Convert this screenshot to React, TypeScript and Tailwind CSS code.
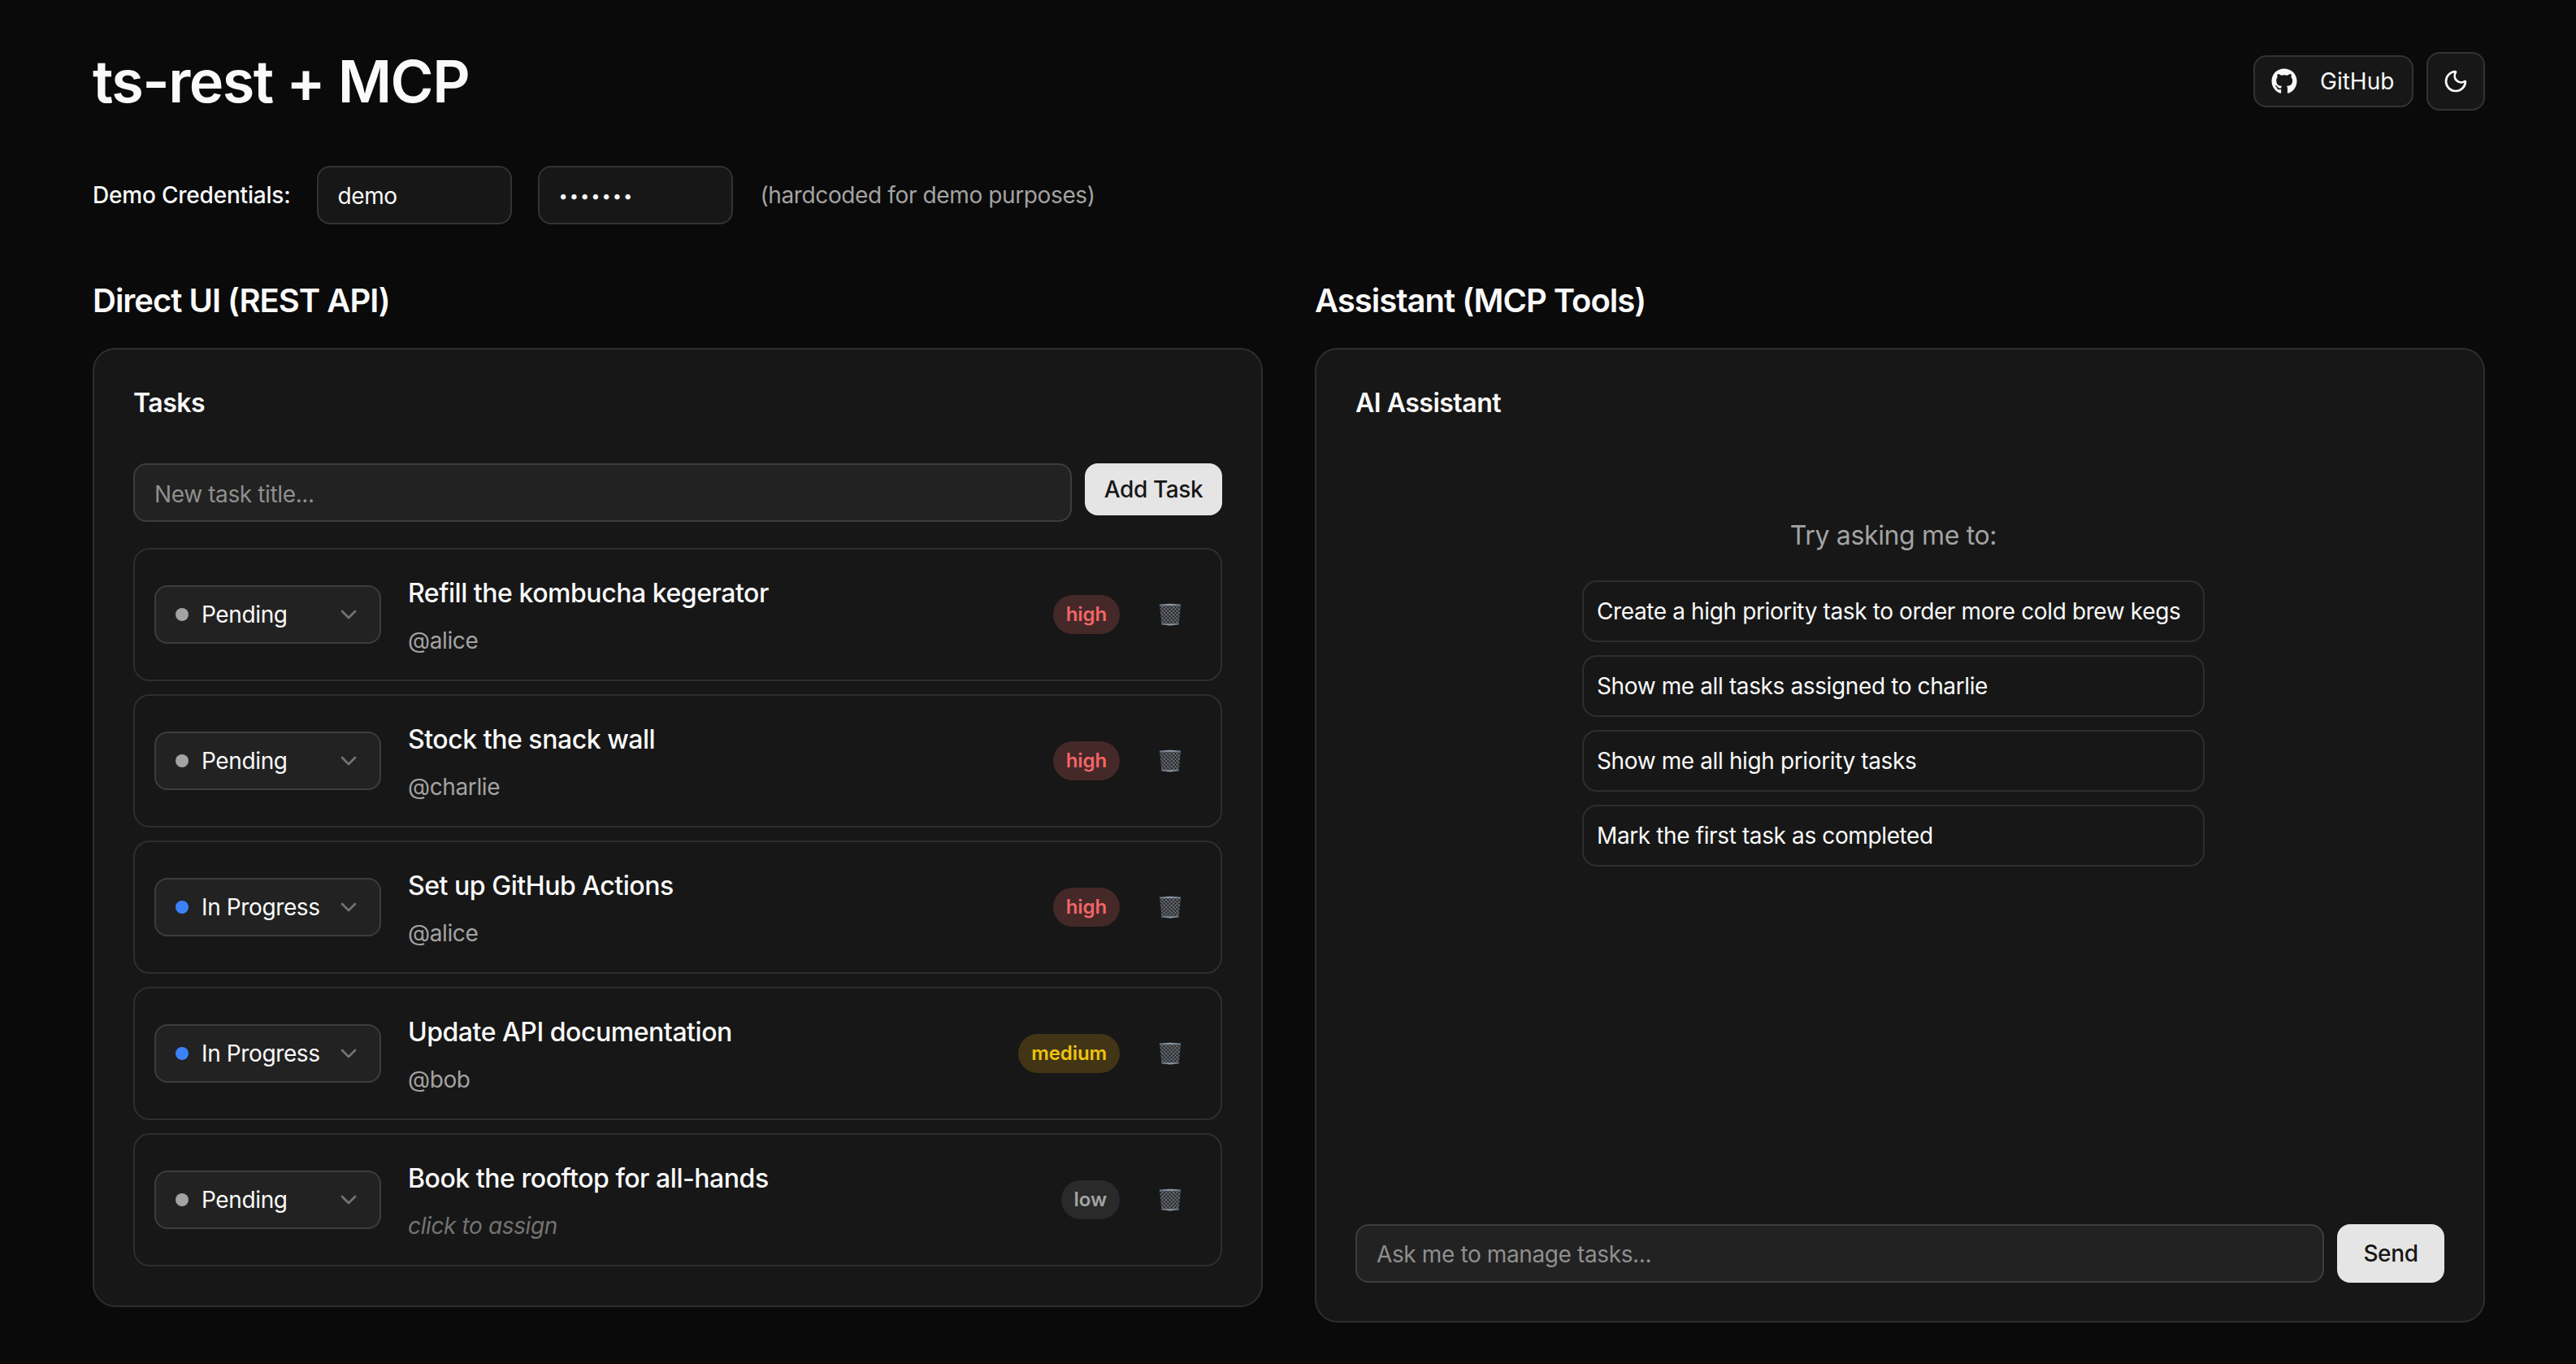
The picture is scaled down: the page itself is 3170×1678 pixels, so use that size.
import { ChevronDown, Moon } from 'lucide-react'
import { FaGithub } from 'react-icons/fa'

type Priority = 'high' | 'medium' | 'low'
type Status = 'Pending' | 'In Progress'

interface Task {
  title: string
  owner: string | null
  status: Status
  priority: Priority
}

const tasks: Task[] = [
  { title: 'Refill the kombucha kegerator', owner: '@alice', status: 'Pending', priority: 'high' },
  { title: 'Stock the snack wall', owner: '@charlie', status: 'Pending', priority: 'high' },
  { title: 'Set up GitHub Actions', owner: '@alice', status: 'In Progress', priority: 'high' },
  { title: 'Update API documentation', owner: '@bob', status: 'In Progress', priority: 'medium' },
  { title: 'Book the rooftop for all-hands', owner: null, status: 'Pending', priority: 'low' },
]

const suggestions = [
  'Create a high priority task to order more cold brew kegs',
  'Show me all tasks assigned to charlie',
  'Show me all high priority tasks',
  'Mark the first task as completed',
]

const priorityStyles: Record<Priority, string> = {
  high: 'bg-[#452828] text-[#f26666]',
  medium: 'bg-[#413516] text-[#eec30f]',
  low: 'bg-[#2a2a2a] text-[#a3a3a3]',
}

function TrashIcon({ id }: { id: string }) {
  return (
    <svg width="28" height="28" viewBox="0 0 28 28">
      <defs>
        <pattern id={id} width="3.2" height="3.2" patternUnits="userSpaceOnUse" patternTransform="rotate(45)">
          <rect width="3.2" height="3.2" fill="#292b2e" />
          <path d="M0 0H3.2M0 0V3.2" stroke="#85898f" strokeWidth="1.1" />
        </pattern>
        <linearGradient id={`${id}-rim`} x1="0" x2="1" y1="0" y2="0">
          <stop offset="0" stopColor="#5f6b78" />
          <stop offset="0.5" stopColor="#97a3b0" />
          <stop offset="1" stopColor="#5f6b78" />
        </linearGradient>
      </defs>
      <path d="M1 2L3.4 26Q14 28 24.6 26L27 2Z" fill={`url(#${id})`} />
      <path d="M3.2 24.4Q14 26.6 24.8 24.4L24.6 26.6Q14 28.2 3.4 26.6Z" fill={`url(#${id}-rim)`} />
      <path d="M0.8 1.6Q14 -0.2 27.2 1.6L27 3.4Q14 2 1 3.4Z" fill={`url(#${id}-rim)`} />
    </svg>
  )
}

function StatusSelect({ status }: { status: Status }) {
  return (
    <button className="flex h-[72px] w-[279px] shrink-0 items-center rounded-2xl border-2 border-[#3d3d3d] bg-[#222222] pl-6 pr-[22px] text-[28px] text-[#fafafa]">
      <span className={`h-4 w-4 rounded-full ${status === 'Pending' ? 'bg-[#a3a3a3]' : 'bg-[#3b82f6]'}`} />
      <span className="ml-4">{status}</span>
      <ChevronDown className="ml-auto h-8 w-8 text-[#737373]" />
    </button>
  )
}

function TaskRow({ task, index }: { task: Task; index: number }) {
  return (
    <div className="flex h-[164px] items-center rounded-[20px] border-2 border-[#2e2e2e] px-6">
      <StatusSelect status={task.status} />
      <div className="ml-[33px] min-w-0 flex-1 pt-[2px]">
        <div className="text-[32px] font-medium leading-[48px] tracking-[-0.46px] text-[#fafafa]">{task.title}</div>
        {task.owner ? (
          <div className="mt-[14px] text-[28px] leading-10 text-[#a3a3a3]">{task.owner}</div>
        ) : (
          <div className="mt-[14px] text-[28px] italic leading-10 text-[#737373]">click to assign</div>
        )}
      </div>
      <span
        className={`rounded-full px-4 text-[24px] font-semibold leading-[48px] tracking-[-0.1px] ${priorityStyles[task.priority]}`}
      >
        {task.priority}
      </span>
      <button className="ml-6 flex h-[72px] w-[76px] shrink-0 items-center justify-center">
        <TrashIcon id={`trash-${index}`} />
      </button>
    </div>
  )
}

export default function App() {
  return (
    <div className="min-h-screen bg-[#0a0a0a] pl-[114px] pr-[112px] pt-[60px] font-[family-name:Inter,sans-serif] tracking-[-0.38px] text-[#fafafa]">
      <header className="flex h-20 items-center justify-between">
        <h1 className="text-[72px] font-semibold leading-[80px] tracking-[-1.54px]">ts-rest + MCP</h1>
        <div className="flex items-center gap-4">
          <a className="flex h-16 w-[197px] items-center gap-[28px] rounded-2xl border-2 border-[#333333] bg-[#171717] pl-[20px] text-[28px] tracking-normal">
            <FaGithub className="h-8 w-8" />
            GitHub
          </a>
          <button className="flex h-[72px] w-[72px] items-center justify-center rounded-2xl border-2 border-[#333333] bg-[#171717]">
            <Moon className="h-8 w-8" />
          </button>
        </div>
      </header>

      <div className="mt-16 flex items-center">
        <span className="text-[28px] font-medium tracking-[-0.2px]">Demo Credentials:</span>
        <input
          readOnly
          value="demo"
          className="ml-8 h-[72px] w-[240px] rounded-2xl border-2 border-[#333333] bg-[#171717] px-6 pt-[2px] text-[28px] outline-none"
        />
        <input
          readOnly
          type="password"
          value="demo123"
          className="ml-8 h-[72px] w-[240px] rounded-2xl border-2 border-[#333333] bg-[#171717] px-6 pt-[2px] text-[20px] tracking-[2px] outline-none"
        />
        <span className="ml-[34px] text-[28px] text-[#a3a3a3]">(hardcoded for demo purposes)</span>
      </div>

      <div className="mt-[66px] grid grid-cols-2 items-start gap-x-16">
        <section>
          <h2 className="mb-[30px] text-[40px] font-semibold leading-[56px] tracking-[-1px]">Direct UI (REST API)</h2>
          <div className="rounded-[28px] border-2 border-[#2e2e2e] bg-[#171717] p-12">
            <h3 className="text-[32px] font-semibold leading-9 tracking-[-0.5px]">Tasks</h3>
            <div className="mt-14 flex items-start gap-4">
              <input
                placeholder="New task title..."
                className="h-[72px] flex-1 rounded-2xl border-2 border-[#3d3d3d] bg-[#222222] px-6 pt-1 text-[28px] outline-none placeholder:text-[#8f8f8f]"
              />
              <button className="h-16 w-[169px] rounded-2xl bg-[#e5e5e5] text-[28px] font-medium text-[#171717]">
                Add Task
              </button>
            </div>
            <div className="mt-8 flex flex-col gap-4">
              {tasks.map((task, i) => (
                <TaskRow key={task.title} task={task} index={i} />
              ))}
            </div>
          </div>
        </section>

        <section>
          <h2 className="mb-[30px] text-[40px] font-semibold leading-[56px] tracking-[-1px]">Assistant (MCP Tools)</h2>
          <div className="flex h-[1199px] flex-col rounded-[28px] border-2 border-[#2e2e2e] bg-[#171717] px-12 pb-[47px] pt-12">
            <h3 className="text-[32px] font-semibold leading-9 tracking-[-0.5px]">AI Assistant</h3>
            <div className="mt-[121px] flex flex-col items-center pr-4">
              <p className="text-[32px] leading-[48px] tracking-[-0.35px] text-[#a3a3a3]">Try asking me to:</p>
              <div className="mt-[31px] flex w-[766px] flex-col gap-4">
                {suggestions.map((text) => (
                  <button
                    key={text}
                    className="h-[76px] rounded-[18px] border-2 border-[#2e2e2e] px-4 text-left text-[28px] text-[#fafafa]"
                  >
                    {text}
                  </button>
                ))}
              </div>
            </div>
            <div className="mt-auto flex gap-4">
              <input
                placeholder="Ask me to manage tasks..."
                className="h-[72px] flex-1 rounded-2xl border-2 border-[#3d3d3d] bg-[#222222] px-6 pt-[2px] text-[28px] outline-none placeholder:text-[#8f8f8f]"
              />
              <button className="h-[72px] w-[132px] rounded-2xl bg-[#e5e5e5] text-[28px] font-medium text-[#171717]">
                Send
              </button>
            </div>
          </div>
        </section>
      </div>
    </div>
  )
}
